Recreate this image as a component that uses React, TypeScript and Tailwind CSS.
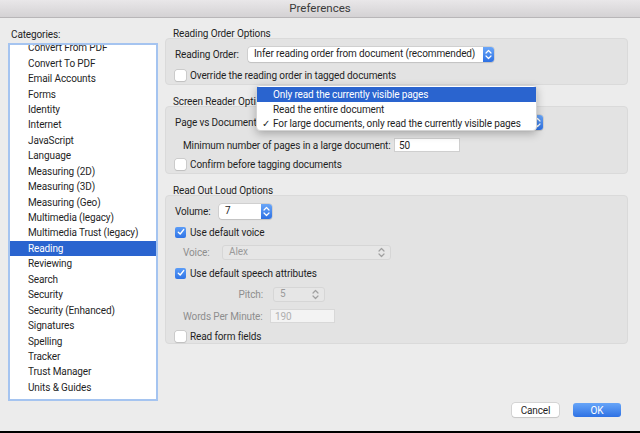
import React from 'react';

const categories = [
  'Convert From PDF',
  'Convert To PDF',
  'Email Accounts',
  'Forms',
  'Identity',
  'Internet',
  'JavaScript',
  'Language',
  'Measuring (2D)',
  'Measuring (3D)',
  'Measuring (Geo)',
  'Multimedia (legacy)',
  'Multimedia Trust (legacy)',
  'Reading',
  'Reviewing',
  'Search',
  'Security',
  'Security (Enhanced)',
  'Signatures',
  'Spelling',
  'Tracker',
  'Trust Manager',
  'Units & Guides',
];

function Chevrons({ color }: { color: string }) {
  return (
    <svg width="7" height="11" viewBox="0 0 7 11" fill="none">
      <path d="M1 4 L3.5 1.5 L6 4" stroke={color} strokeWidth="1.2" strokeLinecap="round" strokeLinejoin="round" />
      <path d="M1 7 L3.5 9.5 L6 7" stroke={color} strokeWidth="1.2" strokeLinecap="round" strokeLinejoin="round" />
    </svg>
  );
}

function Select({ value, width, disabled }: { value: string; width: string; disabled?: boolean }) {
  if (disabled) {
    return (
      <div className={`${width} h-[15px] shrink-0 flex items-center justify-between rounded-[3px] bg-[#e6e6e6] border border-[#d6d6d6] pl-[6px] pr-[5px] text-[#9a9a9a]`}>
        <span>{value}</span>
        <Chevrons color="#a0a0a0" />
      </div>
    );
  }
  return (
    <div className={`${width} h-[15px] shrink-0 flex items-stretch rounded-[3px] bg-white shadow-[0_0_0_0.5px_#bdbdbd,0_1px_1px_rgba(0,0,0,0.12)] overflow-hidden`}>
      <span className="flex-1 flex items-center pl-[6px] whitespace-nowrap overflow-hidden">{value}</span>
      <span className="w-[11px] flex items-center justify-center bg-gradient-to-b from-[#6aa6f8] to-[#2d70e3]">
        <Chevrons color="#ffffff" />
      </span>
    </div>
  );
}

function Checkbox({ checked, label }: { checked?: boolean; label: string }) {
  return (
    <div className="h-[14px] flex items-center gap-[4px] whitespace-nowrap">
      {checked ? (
        <span className="w-[11px] h-[11px] rounded-[2px] bg-gradient-to-b from-[#5b9cf7] to-[#2f74e6] flex items-center justify-center">
          <svg width="8" height="8" viewBox="0 0 8 8" fill="none">
            <path d="M1.3 4.2 L3.2 6 L6.7 1.6" stroke="#fff" strokeWidth="1.4" strokeLinecap="round" strokeLinejoin="round" />
          </svg>
        </span>
      ) : (
        <span className="w-[11px] h-[11px] rounded-[2px] bg-white shadow-[0_0_0_0.5px_#b5b5b5,0_1px_1px_rgba(0,0,0,0.1)]" />
      )}
      <span className="pt-[1px]">{label}</span>
    </div>
  );
}

export default function App() {
  return (
    <div
      className="w-[640px] h-[433px] bg-[#ececec] flex flex-col text-[10px] tracking-[-0.12px] leading-none text-[#1f1f1f] overflow-hidden"
      style={{ fontFamily: 'Roboto, "Liberation Sans", Arial, sans-serif' }}
    >
      {/* title bar */}
      <div className="h-[18px] shrink-0 flex items-center justify-center bg-gradient-to-b from-[#e9e7e9] to-[#d4d2d4] border-b border-[#b8b6b8] text-[11.5px] tracking-normal text-[#3a3a3a]">
        Preferences
      </div>

      <div className="flex-1 flex">
        {/* categories */}
        <div className="w-[165px] shrink-0 pl-[8px] pt-[11px]">
          <div className="h-[12px] leading-[12px] pl-[3px]">Categories:</div>
          <div className="mt-[2px] w-[150px] h-[358px] bg-white border-2 border-[#a5c4f0] overflow-hidden">
            <div className="-mt-[5px]">
              {categories.map((c) => (
                <div
                  key={c}
                  className={`h-[15.45px] flex items-center pl-[18px] pt-[1px] whitespace-nowrap ${c === 'Reading' ? 'bg-[#2a64cf] text-white' : ''}`}
                >
                  {c}
                </div>
              ))}
            </div>
          </div>
        </div>

        {/* options */}
        <div className="w-[463px] pt-[9px] relative whitespace-nowrap">
          <div className="h-[11px] leading-[11px] pl-[8px] pt-[1px]">Reading Order Options</div>
          <div className="h-[47px] rounded-[4px] bg-[#e3e3e3] border border-[#dadada] pl-[9px] pt-[7px]">
            <div className="flex items-center h-[16px]">
              <span className="w-[73px] pt-[1px]">Reading Order:</span>
              <Select value="Infer reading order from document (recommended)" width="w-[246px]" />
            </div>
            <div className="mt-[6px]">
              <Checkbox label="Override the reading order in tagged documents" />
            </div>
          </div>

          <div className="mt-[10px] h-[11px] leading-[11px] pl-[8px] pt-[1px]">Screen Reader Options</div>
          <div className="h-[68px] rounded-[4px] bg-[#e3e3e3] border border-[#dadada] pl-[9px] pt-[7px]">
            <div className="flex items-center h-[16px]">
              <span className="w-[87px] pt-[1px]">Page vs Document:</span>
              <Select value="For large documents, only read the currently visible pages" width="w-[281px]" />
            </div>
            <div className="mt-[8px] h-[14px] flex items-center pl-[8px]">
              <span className="w-[211px] pt-[1px]">Minimum number of pages in a large document:</span>
              <span className="w-[66px] h-[14px] bg-white border border-[#cfcfcf] flex items-center pl-[4px] pt-[1px]">50</span>
            </div>
            <div className="mt-[5px]">
              <Checkbox label="Confirm before tagging documents" />
            </div>
          </div>

          <div className="mt-[10px] h-[11px] leading-[11px] pl-[8px] pt-[1px]">Read Out Loud Options</div>
          <div className="h-[149px] rounded-[4px] bg-[#e3e3e3] border border-[#dadada] pl-[9px] pt-[7px]">
            <div className="flex items-center h-[16px]">
              <span className="w-[44px] pt-[1px]">Volume:</span>
              <Select value="7" width="w-[53px]" />
            </div>
            <div className="mt-[6px]">
              <Checkbox checked label="Use default voice" />
            </div>
            <div className="mt-[5px] h-[16px] flex items-center pl-[8px] text-[#8e8e8e]">
              <span className="w-[39px] pt-[1px]">Voice:</span>
              <Select value="Alex" width="w-[169px]" disabled />
            </div>
            <div className="mt-[6px]">
              <Checkbox checked label="Use default speech attributes" />
            </div>
            <div className="mt-[6px] h-[16px] flex items-center text-[#8e8e8e]">
              <span className="w-[89px] text-right pr-[1px] pt-[1px]">Pitch:</span>
              <span className="w-[9px]" />
              <Select value="5" width="w-[52px]" disabled />
            </div>
            <div className="mt-[7px] h-[14px] flex items-center pl-[8px] text-[#8e8e8e]">
              <span className="w-[87px] pt-[1px]">Words Per Minute:</span>
              <span className="w-[65px] h-[14px] bg-[#f3f3f3] border border-[#d8d8d8] flex items-center pl-[4px] pt-[1px] text-[#b0b0b0]">190</span>
            </div>
            <div className="mt-[6px]">
              <Checkbox label="Read form fields" />
            </div>
          </div>

          {/* open popup menu */}
          <div className="absolute left-[91px] top-[67px] w-[281px] h-[46px] bg-white rounded-[4px] border border-[#d4d4d4] shadow-[0_3px_8px_rgba(0,0,0,0.25)] pt-[1px]">
            <div className="h-[15px] flex items-center pl-[16px] pt-[1px] bg-[#2a64cf] text-white">Only read the currently visible pages</div>
            <div className="h-[14px] flex items-center pl-[16px] pt-[1px]">Read the entire document</div>
            <div className="h-[14px] flex items-center pt-[1px]">
              <span className="w-[16px] pl-[5px] text-[10px]">✓</span>
              <span>For large documents, only read the currently visible pages</span>
            </div>
          </div>
        </div>
      </div>

      {/* footer buttons */}
      <div className="h-[29px] shrink-0 flex items-start justify-end gap-[14px] pr-[19px] pt-[1px]">
        <div className="w-[47px] h-[14px] rounded-[3px] bg-white shadow-[0_0_0_0.5px_#bdbdbd,0_1px_1px_rgba(0,0,0,0.12)] flex items-center justify-center pt-[1px]">
          Cancel
        </div>
        <div className="w-[48px] h-[14px] rounded-[3px] bg-gradient-to-b from-[#67a5f8] to-[#2e71e4] text-white flex items-center justify-center pt-[1px]">
          OK
        </div>
      </div>
      <div className="h-[2px] shrink-0 bg-black" />
    </div>
  );
}
